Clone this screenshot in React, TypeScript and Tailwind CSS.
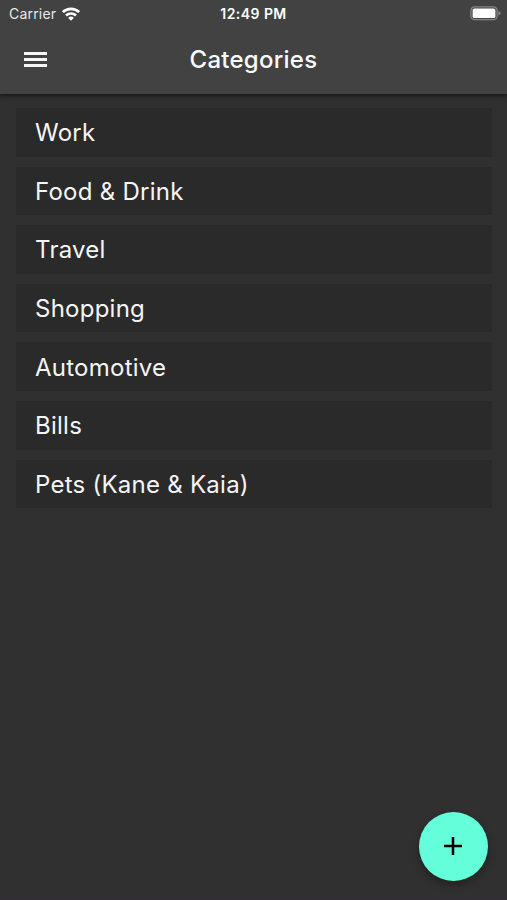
const categories = [
  "Work",
  "Food & Drink",
  "Travel",
  "Shopping",
  "Automotive",
  "Bills",
  "Pets (Kane & Kaia)",
];

function WifiIcon() {
  return (
    <svg width="18" height="14" viewBox="0 0 18 14" fill="none" stroke="#fff" strokeWidth="2.7">
      <path d="M0.9 5.1a11.7 11.7 0 0 1 16.2 0" />
      <path d="M4 8.5a7.2 7.2 0 0 1 10 0" />
      <path d="M9 13.7 6.2 10.9a4 4 0 0 1 5.6 0z" fill="#fff" stroke="none" />
    </svg>
  );
}

function BatteryIcon() {
  return (
    <svg width="31" height="15" viewBox="0 0 31 15" fill="none">
      <rect x="0.9" y="0.8" width="26.2" height="12.9" rx="3.6" stroke="#858585" strokeWidth="1.3" />
      <rect x="2.6" y="2.5" width="22.8" height="9.6" rx="1.6" fill="#fff" />
      <path d="M28.4 5c1.6.6 2.2 1.4 2.2 2.3s-.6 1.7-2.2 2.3z" fill="#858585" />
    </svg>
  );
}

function StatusBar() {
  return (
    <div className="grid h-[27px] grid-cols-[1fr_auto_1fr] items-center pr-[6px] pl-[9px] text-[14px] leading-none text-white">
      <div className="flex items-center gap-[6px]">
        <span className="tracking-[0.2px] text-[#e8e8e8]">Carrier</span>
        <WifiIcon />
      </div>
      <span className="-ml-[3px] text-center font-semibold tracking-[0.45px]">12:49 PM</span>
      <div className="flex justify-end">
        <BatteryIcon />
      </div>
    </div>
  );
}

export default function App() {
  return (
    <div className="flex h-[900px] w-[507px] flex-col overflow-hidden border-b border-[#3a2a36] bg-[#303030] font-[Inter,Roboto,sans-serif] text-white">
      {/* App bar */}
      <header className="relative h-[94px] shrink-0 bg-[#424242] shadow-[0_1px_4px_1px_rgba(0,0,0,0.5)]">
        <StatusBar />
        <div className="grid h-[66px] grid-cols-[1fr_auto_1fr] items-center">
          <button className="mb-[1px] ml-[24px] flex w-[22.5px] flex-col gap-[3px]" aria-label="Menu">
            <span className="h-[3px] w-full bg-[#f5f5f5]" />
            <span className="h-[3px] w-full bg-[#f5f5f5]" />
            <span className="h-[3px] w-full bg-[#f5f5f5]" />
          </button>
          <h1 className="text-[24px] leading-none font-medium tracking-[0.25px] text-[#fafafa]">Categories</h1>
        </div>
      </header>

      {/* Category list */}
      <ul className="flex flex-1 flex-col gap-[10px] pt-[14px] pr-[15px] pl-[16px]">
        {categories.map((name) => (
          <li
            key={name}
            className="flex h-[48.6px] items-center bg-[#2a2a2a] pt-[2px] pl-[19px] text-[24px] leading-none tracking-[0.25px] text-[#f5f5f5]"
          >
            {name}
          </li>
        ))}
      </ul>

      {/* Add button */}
      <div className="flex justify-end pr-[19.5px] pb-[18.5px]">
        <button
          className="flex size-[69px] items-center justify-center rounded-full bg-[#64ffda] shadow-[0_4px_8px_rgba(0,0,0,0.3)]"
          aria-label="Add category"
        >
          <svg width="18" height="18" viewBox="0 0 18 18" stroke="#000" strokeWidth="2.5">
            <path d="M9 0v18M0 9h18" />
          </svg>
        </button>
      </div>
    </div>
  );
}
